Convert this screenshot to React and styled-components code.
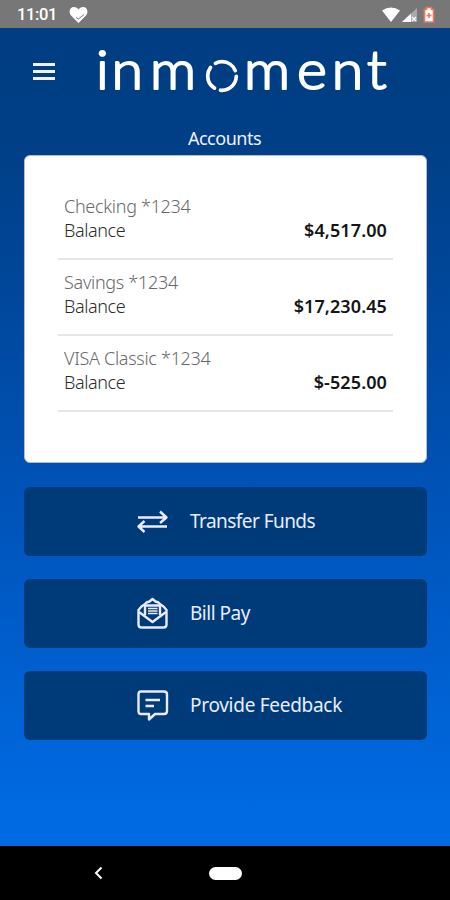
import React from "react";
import styled, { createGlobalStyle } from "styled-components";

const Global = createGlobalStyle`
  * { box-sizing: border-box; }
  body { margin: 0; font-family: "Noto Sans", sans-serif; }
`;

const Screen = styled.div`
  width: 450px;
  height: 900px;
  display: flex;
  flex-direction: column;
  overflow: hidden;
`;

const StatusBar = styled.div`
  height: 28px;
  flex: none;
  background: #777;
  color: #fff;
  display: flex;
  align-items: center;
  justify-content: space-between;
  padding: 1px 15px 0 17px;
`;

const StatusGroup = styled.div`
  display: flex;
  align-items: center;
  gap: ${(p) => p.$gap}px;
`;

const Clock = styled.span`
  font: 500 16.5px/20px Roboto, sans-serif;
  letter-spacing: -0.35px;
  width: 40px;
  white-space: nowrap;
`;

const Body = styled.main`
  flex: 1;
  background: linear-gradient(#003d82 0%, #003f86 14%, #0051b4 54%, #006ae2 96%, #006ae2 100%);
  padding: 0 23px 0 24px;
`;

const Header = styled.header`
  height: 98px;
  display: flex;
  align-items: flex-start;
`;

const MenuButton = styled.button`
  width: 22px;
  height: 17px;
  margin: 35px 39px 0 9px;
  padding: 0;
  border: 0;
  background: none;
  display: flex;
  flex-direction: column;
  justify-content: space-between;
`;

const MenuLine = styled.span`
  width: 22px;
  height: 3px;
  background: #f2f2ff;
`;

const Logo = styled.svg`
  margin-top: 4px;
  display: block;
  text {
    font: 300 54px Lato, sans-serif;
    fill: #fff;
    stroke: #fff;
    stroke-width: 2.1px;
    stroke-linejoin: round;
  }
`;

const Title = styled.h1`
  height: 29px;
  margin: 0;
  color: #eef1ff;
  text-align: center;
  font-size: 18px;
  font-weight: 400;
  line-height: 24px;
  letter-spacing: -0.5px;
  padding-right: 2px;
`;

const Card = styled.section`
  height: 308px;
  background: #fff;
  border: 1px solid #b5bcc2;
  border-radius: 6px;
  padding: 28px 33px 0;
`;

const Account = styled.div`
  height: 76px;
  border-bottom: 2px solid #e6e6e6;
  padding: 9.5px 6px 0;
`;

const AccountName = styled.div`
  color: #686868;
  font-size: 18px;
  line-height: 24px;
  font-weight: 300;
  letter-spacing: -0.3px;
`;

const BalanceRow = styled.div`
  display: flex;
  justify-content: space-between;
  font-size: 18px;
  line-height: 24px;
  font-weight: 300;
  color: #2c2c2c;
`;

const BalanceLabel = styled.span`
  letter-spacing: -0.42px;
`;

const Amount = styled.span`
  font-weight: 600;
  color: #151515;
  letter-spacing: 0.1px;
`;

const Actions = styled.div`
  display: flex;
  flex-direction: column;
  gap: 23px;
  margin-top: 24px;
`;

const ActionButton = styled.button`
  height: 69px;
  border: 0;
  border-radius: 6px;
  background: #003b79;
  color: #e9edff;
  font: 400 19px/26px "Noto Sans", sans-serif;
  display: flex;
  align-items: center;
  gap: 21px;
  padding: 0 0 0 112px;
  text-align: left;
`;

const ActionLabel = styled.span`
  white-space: nowrap;
  letter-spacing: ${(p) => p.$tracking}px;
  padding-bottom: 2px;
`;

const ActionIcon = styled.svg`
  width: 33px;
  height: 33px;
  fill: none;
  stroke: #eceaff;
  stroke-width: 2.4;
  stroke-linejoin: round;
`;

const NavBar = styled.nav`
  height: 54px;
  flex: none;
  background: #000;
  display: flex;
  align-items: center;
  padding-left: 94px;
`;

const HomePill = styled.span`
  width: 33px;
  height: 13px;
  border-radius: 6.5px;
  background: #fff;
  margin-left: 106px;
`;

const accounts = [
  ["Checking *1234", "$4,517.00"],
  ["Savings *1234", "$17,230.45"],
  ["VISA Classic *1234", "$-525.00"],
];

const TransferIcon = () => (
  <ActionIcon viewBox="0 0 33 33">
    <path d="M2 12.500H30M24 6.500l6.500 6-6.500 5.500M31 21.500H3M8.500 16L2.500 21.500l6 5.500" />
  </ActionIcon>
);

const MailIcon = () => (
  <ActionIcon viewBox="0 0 33 33">
    <path d="M2.500 13V27.500Q2.500 30.500 5.500 30.500H27.500Q30.500 30.500 30.500 27.500V13L27.500 9.500 24.500 7.500 22.500 5.500 19.500 4.500 16.500 2 13.500 4.500 10.500 5.500 8.500 7.500 5.500 9.500Z" />
    <path d="M3 15L16.500 25L30 15M9 18V8.500H24V18" />
    <path d="M12 11.500H21.500M12 14H21.500M12 16.500H21.500" strokeWidth="1.700" />
  </ActionIcon>
);

const FeedbackIcon = () => (
  <ActionIcon viewBox="0 0 33 33">
    <path d="M5 2.500H28Q31 2.500 31 5.500V22Q31 25 28 25H19L13 30.500V25H5Q2.500 25 2.500 22V5.500Q2.500 2.500 5 2.500Z" />
    <path d="M9.500 11H24M9.500 17H18" />
  </ActionIcon>
);

const actions = [
  { label: "Transfer Funds", Icon: TransferIcon, tracking: -0.55 },
  { label: "Bill Pay", Icon: MailIcon, tracking: -0.5 },
  { label: "Provide Feedback", Icon: FeedbackIcon, tracking: -0.28 },
];

export default function App() {
  return (
    <Screen>
      <Global />
      <StatusBar>
        <StatusGroup $gap={12}>
          <Clock>11:01</Clock>
          <svg width="19" height="18" viewBox="0 0 19 18">
            <path d="M9.500 17L2 9.500C-1 5.500 1 1 5 1c2 0 3.500 1 4.500 2.500C10.500 2 12 1 14 1c4 0 6 4.500 3 8.500Z" fill="#fff" />
            <path d="M7 11.500l2.500 1.500 5.500-4.500" fill="none" stroke="#777" strokeWidth="1" />
          </svg>
        </StatusGroup>
        <StatusGroup $gap={2}>
          <svg width="18" height="15" viewBox="0 0 18 15">
            <path d="M0 3.500Q9-2.500 18 3.500L9 15Z" fill="#fff" />
          </svg>
          <svg width="15" height="15" viewBox="0 0 15 15">
            <path d="M0 15L15 1V15Z" fill="#a9a9a9" />
            <path d="M0 15L9 6.500V15Z" fill="#fff" />
            <path d="M10 10l4 4M14 10l-4 4" stroke="#fff" strokeWidth="1.200" />
          </svg>
          <svg width="16" height="17" viewBox="0 0 16 17">
            <path d="M7.500 1.500h5v2h2v12.500h-9v-12.500h2Z" fill="#fff" stroke="#e9785f" strokeWidth="1.700" />
            <path d="M10 7v5M7.500 9.500h5" stroke="#e9785f" strokeWidth="1.600" />
          </svg>
        </StatusGroup>
      </StatusBar>
      <Body>
        <Header>
          <MenuButton aria-label="Menu">
            <MenuLine /><MenuLine /><MenuLine />
          </MenuButton>
          <Logo width="298" height="76" viewBox="94 32 298 76" role="img" aria-label="inmoment">
            <text x="90.500 105.200 141.500" y="89" transform="scale(1.06 1)">inm</text>
            <circle cx="222" cy="76" r="14.300" fill="none" stroke="#fff" strokeWidth="3.700" strokeLinecap="round" strokeDasharray="23.600 6.350" transform="rotate(1 222 76)" />
            <text x="230.200 280.200 313 346.300" y="89" transform="scale(1.06 1)">ment</text>
          </Logo>
        </Header>
        <Title>Accounts</Title>
        <Card>
          {accounts.map(([name, amount]) => (
            <Account key={name}>
              <AccountName>{name}</AccountName>
              <BalanceRow>
                <BalanceLabel>Balance</BalanceLabel>
                <Amount>{amount}</Amount>
              </BalanceRow>
            </Account>
          ))}
        </Card>
        <Actions>
          {actions.map(({ label, Icon, tracking }) => (
            <ActionButton key={label}>
              <Icon />
              <ActionLabel $tracking={tracking}>{label}</ActionLabel>
            </ActionButton>
          ))}
        </Actions>
      </Body>
      <NavBar>
        <svg width="9" height="14" viewBox="0 0 9 14">
          <path d="M7.500 1.500L2 7l5.500 5.500" fill="none" stroke="#fff" strokeWidth="2" />
        </svg>
        <HomePill />
      </NavBar>
    </Screen>
  );
}
